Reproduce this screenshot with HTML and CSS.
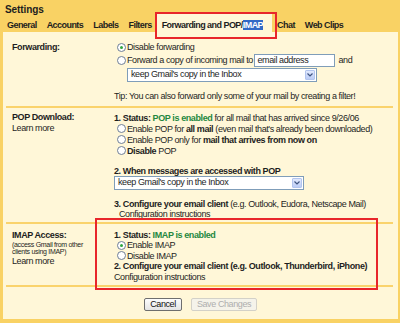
FILE: index.html
```html
<!DOCTYPE html>
<html>
<head>
<meta charset="utf-8">
<link rel="stylesheet" href="styles.css">
</head>
<body>
<div class="page">
  <h1 class="title">Settings</h1>
  <nav class="tabs">
    <span class="tab">General</span>
    <span class="tab">Accounts</span>
    <span class="tab">Labels</span>
    <span class="tab">Filters</span>
    <span class="tab active">Forwarding and POP/<span class="sel">IMAP</span></span>
    <span class="tab">Chat</span>
    <span class="tab">Web Clips</span>
  </nav>
  <div class="panel">
    <section class="sec fwd">
      <div class="lbl"><div class="lh11">Forwarding:</div></div>
      <div class="body">
        <div class="ln h11"><span class="radio on"></span>Disable forwarding</div>
        <div class="ln h13 mt1"><span class="radio"></span>Forward a copy of incoming mail to <span class="input">email address</span><span class="after">and</span></div>
        <div class="select sel-fwd"><span class="stext">keep Gmail's copy in the Inbox</span><span class="arrow"><svg width="6" height="4" viewBox="0 0 6 4"><path d="M0.5 0.5 L3 3 L5.5 0.5" fill="none" stroke="#3f5480" stroke-width="1.2"/></svg></span></div>
        <div class="ln h11 tip">Tip: You can also forward only some of your mail by creating a filter!</div>
      </div>
    </section>
    <div class="sep"></div>
    <section class="sec pop">
      <div class="lbl">
        <div class="lh11">POP Download:</div>
        <div class="lh11 reg">Learn more</div>
      </div>
      <div class="body">
        <div class="ln h11"><b>1. Status:&nbsp;</b><b class="ok">POP is enabled</b>&nbsp;for all mail that has arrived since 9/26/06</div>
        <div class="ln h11"><span class="radio"></span>Enable POP for&nbsp;<b>all mail</b>&nbsp;(even mail that's already been downloaded)</div>
        <div class="ln h11"><span class="radio"></span>Enable POP only for&nbsp;<b>mail that arrives from now on</b></div>
        <div class="ln h11"><span class="radio"></span><b>Disable</b>&nbsp;POP</div>
        <div class="ln h10 when"><b>2. When messages are accessed with POP</b></div>
        <div class="select sel-pop"><span class="stext">keep Gmail's copy in the Inbox</span><span class="arrow"><svg width="6" height="4" viewBox="0 0 6 4"><path d="M0.5 0.5 L3 3 L5.5 0.5" fill="none" stroke="#3f5480" stroke-width="1.2"/></svg></span></div>
        <div class="ln h10 conf"><b>3. Configure your email client</b>&nbsp;(e.g. Outlook, Eudora, Netscape Mail)</div>
        <div class="ln h10 indent">Configuration instructions</div>
      </div>
    </section>
    <div class="sep"></div>
    <section class="sec imap">
      <div class="lbl">
        <div class="lh104">IMAP Access:</div>
        <div class="small">(access Gmail from other<br>clients using IMAP)</div>
        <div class="lh10 reg">Learn more</div>
      </div>
      <div class="body">
        <div class="ln h104"><b>1. Status:&nbsp;</b><b class="ok">IMAP is enabled</b></div>
        <div class="ln h104"><span class="radio on"></span>Enable IMAP</div>
        <div class="ln h104"><span class="radio"></span>Disable IMAP</div>
        <div class="ln h104"><b>2. Configure your email client (e.g. Outlook, Thunderbird, iPhone)</b></div>
        <div class="ln h104">Configuration instructions</div>
      </div>
    </section>
    <div class="sep"></div>
    <div class="buttons">
      <span class="btn cancel">Cancel</span>
      <span class="btn save">Save Changes</span>
    </div>
  </div>
  <div class="mark mark-tab"></div>
  <div class="mark mark-imap"></div>
</div>
</body>
</html>
```
FILE: styles.css
```css
html, body {
  margin: 0;
  padding: 0;
}
body {
  background: #f9d264;
  font-family: "Liberation Sans", Arial, sans-serif;
  font-size: 9px;
  letter-spacing: -0.4px;
  color: #1e1e1e;
}
.page {
  position: relative;
  width: 400px;
  height: 323px;
  overflow: hidden;
  display: flex;
  flex-direction: column;
}
.title {
  margin: 0;
  height: 13px;
  line-height: 19px;
  font-size: 10px;
  letter-spacing: -0.1px;
  font-weight: bold;
  padding-left: 5px;
}
.tabs {
  display: flex;
  align-items: flex-end;
  height: 19px;
  padding-left: 2px;
  font-weight: bold;
  letter-spacing: -0.55px;
  white-space: nowrap;
}
.tab {
  padding: 0 5px;
  line-height: 14px;
}
.tab.active {
  background: #fff7d8;
  padding: 5px 9px 0 5px;
}
.sel {
  display: inline-block;
  background: #3169c6;
  color: #fff;
  line-height: 10px;
}
.panel {
  flex: none;
  height: 287px;
  margin: 0 2px 0 3px;
  background: #fff7d8;
}
.sec {
  display: grid;
  grid-template-columns: 111px 1fr;
}
.lbl {
  padding-left: 9px;
  font-weight: bold;
  white-space: nowrap;
}
.lbl .reg {
  font-weight: normal;
}
.lh11 { line-height: 11px; }
.lh10 { line-height: 10px; }
.lh104 { line-height: 10.4px; }
.small {
  font-size: 7px;
  letter-spacing: -0.3px;
  font-weight: normal;
  line-height: 7.8px;
  margin-top: 0.4px;
}
.ln {
  display: flex;
  align-items: center;
  white-space: nowrap;
}
.h11 { height: 11px; }
.h13 { height: 13px; }
.h10 { height: 10px; }
.h104 { height: 10.4px; }
.mt1 { margin-top: 1px; }
.ok { color: #24883f; }
.fwd {
  padding-top: 9.5px;
  padding-bottom: 4.5px;
}
.pop {
  padding-top: 4.5px;
  padding-bottom: 3.6px;
}
.imap {
  padding-top: 5.5px;
  padding-bottom: 3.2px;
}
.radio {
  flex: none;
  box-sizing: border-box;
  width: 9px;
  height: 9px;
  margin: 0 1px 0 3px;
  border: 1px solid #6f7f96;
  border-radius: 50%;
  background: #fff;
  display: flex;
  align-items: center;
  justify-content: center;
}
.radio.on::after {
  content: "";
  width: 3px;
  height: 3px;
  border-radius: 50%;
  background: #2fa640;
}
.input {
  box-sizing: border-box;
  width: 81px;
  height: 13px;
  line-height: 11px;
  margin-left: 1.5px;
  padding-left: 2px;
  border: 1px solid #7f9db9;
  background: #fff;
}
.after {
  margin-left: 3px;
}
.select {
  box-sizing: border-box;
  display: flex;
  align-items: center;
  justify-content: space-between;
  width: 190px;
  height: 13.5px;
  border: 1px solid #7f9db9;
  background: #fff;
}
.sel-fwd {
  margin: 1.5px 0 0 13px;
}
.sel-pop {
  margin: 0;
}
.stext {
  padding-left: 3px;
  line-height: 11px;
  white-space: nowrap;
}
.arrow {
  box-sizing: border-box;
  width: 10px;
  height: 10px;
  margin-right: 1px;
  border: 1px solid #b3c5ee;
  border-radius: 1px;
  background: linear-gradient(#e1e9fd, #bccdf6);
  display: flex;
  align-items: center;
  justify-content: center;
}
.tip {
  margin-top: 8.5px;
}
.when {
  margin-top: 10.2px;
}
.conf {
  margin-top: 9px;
}
.indent {
  padding-left: 5px;
}
.sep {
  height: 2px;
  margin: 0 5px 0 3px;
  background: #fad36c;
}
.buttons {
  display: flex;
  justify-content: center;
  gap: 9px;
  margin-top: 11.5px;
}
.btn {
  box-sizing: border-box;
  height: 13px;
  line-height: 11px;
  text-align: center;
  border-radius: 2px;
  white-space: nowrap;
}
.cancel {
  width: 38px;
  border: 1px solid #6e6e6e;
  background: linear-gradient(#fdfdfd, #e4e4e4);
  color: #111;
}
.save {
  width: 66px;
  border: 1px solid #d3d1c8;
  background: #f5f3ea;
  color: #aeaeae;
}
.mark {
  position: absolute;
  border: 2px solid #e8262b;
  pointer-events: none;
}
.mark-tab {
  left: 155px;
  top: 12px;
  width: 118px;
  height: 23px;
}
.mark-imap {
  left: 95px;
  top: 218px;
  width: 279px;
  height: 68px;
}
```
